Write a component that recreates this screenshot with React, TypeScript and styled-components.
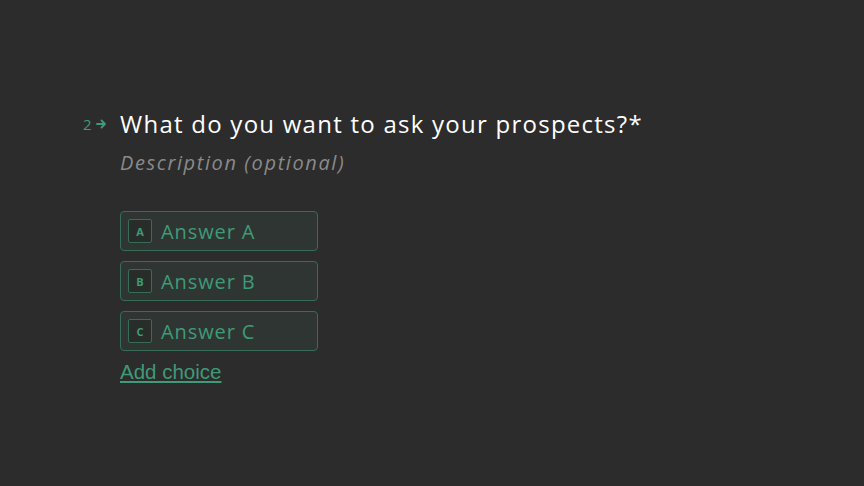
import React from "react";
import styled, { createGlobalStyle } from "styled-components";

const Global = createGlobalStyle`
  html, body { margin: 0; padding: 0; background: #2c2c2c; }
  body { font-family: "Open Sans", sans-serif; }
`;

const Page = styled.div`
  width: 864px;
  height: 486px;
  background: #2c2c2c;
  box-sizing: border-box;
  padding: 108px 0 0 80px;
  display: flex;
  align-items: flex-start;
`;

const Counter = styled.div`
  display: flex;
  align-items: center;
  gap: 4px;
  width: 40px;
  height: 32px;
  color: #3f9a77;
  font-family: "Open Sans", sans-serif;
  font-size: 15px;
  padding-left: 3px;
  box-sizing: border-box;
`;

const Body = styled.div`
  display: flex;
  flex-direction: column;
`;

const Title = styled.div`
  color: #ffffff;
  font-family: "Open Sans", sans-serif;
  font-size: 24px;
  line-height: 32px;
  letter-spacing: 1.25px;
`;

const Description = styled.div`
  color: #8a8a8a;
  font-family: "Open Sans", sans-serif;
  font-style: italic;
  font-size: 20px;
  line-height: 28px;
  margin-top: 9px;
  letter-spacing: 1.6px;
`;

const Choices = styled.div`
  display: flex;
  flex-direction: column;
  gap: 10px;
  margin-top: 34px;
`;

const Choice = styled.div`
  width: 198px;
  height: 40px;
  box-sizing: border-box;
  border: 1px solid #356d58;
  border-radius: 4px;
  background: #2f3532;
  display: flex;
  align-items: center;
  padding-left: 7px;
  gap: 9px;
`;

const Key = styled.div`
  width: 24px;
  height: 24px;
  box-sizing: border-box;
  border: 1px solid #356d58;
  border-radius: 2px;
  background: #292d2a;
  color: #3f9a77;
  font-family: "Open Sans", sans-serif;
  font-weight: 700;
  font-size: 11px;
  display: flex;
  align-items: center;
  justify-content: center;
`;

const Label = styled.div`
  color: #3f9a77;
  font-family: "Open Sans", sans-serif;
  font-size: 20px;
  letter-spacing: 0.9px;
`;

const AddChoice = styled.a`
  color: #3f9a77;
  font-family: "Liberation Sans", Arial, sans-serif;
  font-size: 20.5px;
  line-height: 24px;
  text-decoration: underline;
  margin-top: 9px;
  width: fit-content;
  cursor: pointer;
`;

const Arrow = () => (
  <svg width="11" height="10" viewBox="0 0 11 10">
    <path d="M1 5h8M5.5 1.5L9 5l-3.5 3.5" stroke="#3f9a77" strokeWidth="1.8" fill="none" strokeLinecap="round" strokeLinejoin="round" />
  </svg>
);

export default function App() {
  return (
    <>
      <Global />
      <Page>
        <Counter>
          <span>2</span>
          <Arrow />
        </Counter>
        <Body>
          <Title>What do you want to ask your prospects?*</Title>
          <Description>Description (optional)</Description>
          <Choices>
            {["A", "B", "C"].map((k) => (
              <Choice key={k}>
                <Key>{k}</Key>
                <Label>Answer {k}</Label>
              </Choice>
            ))}
          </Choices>
          <AddChoice>Add choice</AddChoice>
        </Body>
      </Page>
    </>
  );
}
